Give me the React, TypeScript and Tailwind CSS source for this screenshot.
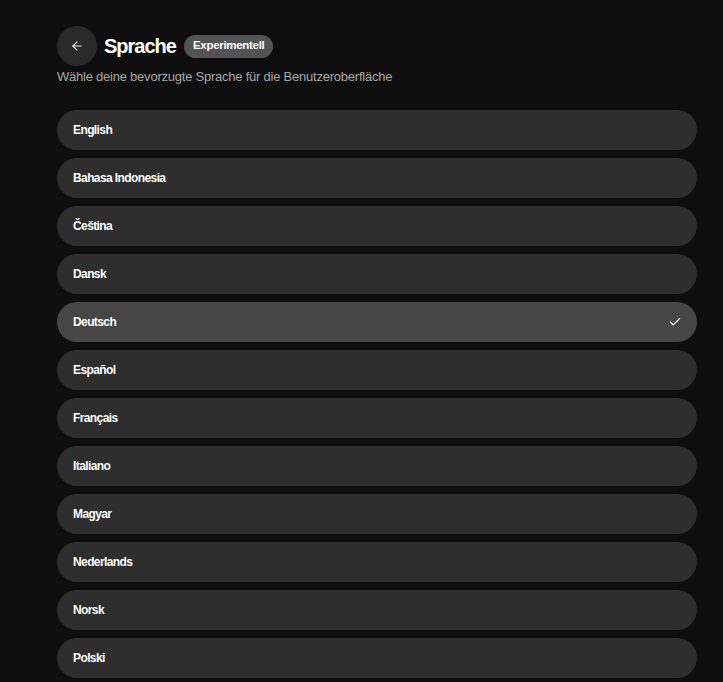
import { ArrowLeft, Check } from 'lucide-react'

const LANGUAGES = [
  'English',
  'Bahasa Indonesia',
  'Čeština',
  'Dansk',
  'Deutsch',
  'Español',
  'Français',
  'Italiano',
  'Magyar',
  'Nederlands',
  'Norsk',
  'Polski',
]

export default function App() {
  const selected = 'Deutsch'

  return (
    <div
      className="min-h-screen h-[682px] overflow-hidden bg-[#0e0e0e] text-white"
      style={{ fontFamily: '"Liberation Sans", Arial, sans-serif' }}
    >
      <div className="ml-[57px] w-[640px] pt-[26px]">
        {/* Header */}
        <div className="flex items-center gap-[7px] h-10">
          <button
            type="button"
            aria-label="Zurück"
            className="w-10 h-10 rounded-full bg-[#2a2a2a] flex items-center justify-center text-white/90"
          >
            <ArrowLeft size={14} strokeWidth={2} />
          </button>
          <h1 className="text-[20px] font-bold tracking-[-1px]">Sprache</h1>
          <span className="ml-[1px] h-[23px] px-[9px] rounded-full bg-[#535353] text-[11.5px] font-bold inline-flex items-center tracking-[-0.3px]">
            Experimentell
          </span>
        </div>
        <p className="mt-[3px] text-[13px] leading-4 tracking-[-0.23px] text-[#a7a7a7]">
          Wähle deine bevorzugte Sprache für die Benutzeroberfläche
        </p>

        {/* Language list */}
        <div className="mt-[25px] flex flex-col gap-2">
          {LANGUAGES.map((lang) => {
            const active = lang === selected
            return (
              <button
                key={lang}
                type="button"
                className={`h-10 w-full shrink-0 rounded-full px-4 flex items-center justify-between text-left text-[12px] font-bold tracking-[-0.6px] ${
                  active ? 'bg-[#464646]' : 'bg-[#2e2e2e]'
                }`}
              >
                <span>{lang}</span>
                {active && <Check size={14} strokeWidth={2} className="mr-[-1px]" />}
              </button>
            )
          })}
        </div>
      </div>
    </div>
  )
}
